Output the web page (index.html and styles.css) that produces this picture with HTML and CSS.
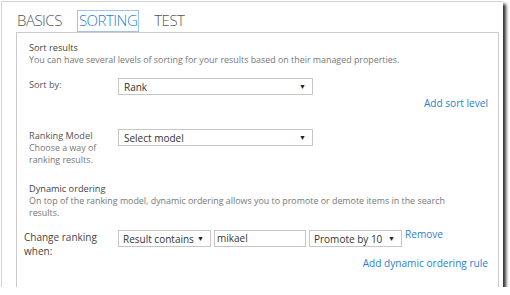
FILE: index.html
```html
<!DOCTYPE html>
<html lang="en">
<head>
	<meta charset="UTF-8">
	<title>Sorting</title>
	<link rel="stylesheet" href="styles.css">
</head>
<body>
	<div class="frame">
		<div class="tabs">
			<span class="tab">BASICS</span>
			<span class="tab tab-active">SORTING</span>
			<span class="tab">TEST</span>
		</div>
		<div class="panel">
			<div class="section">
				<div class="title">Sort results</div>
				<div class="desc">You can have several levels of sorting for your results based on their managed properties.</div>
			</div>

			<div class="row row-sort">
				<div class="label">Sort by:</div>
				<div class="select sel-wide"><span>Rank</span><span class="arrow">&#9660;</span></div>
			</div>
			<div class="link-line"><a class="link">Add sort level</a></div>

			<div class="row row-model">
				<div class="label">Ranking Model<div class="desc">Choose a way of ranking results.</div></div>
				<div class="select sel-wide"><span>Select model</span><span class="arrow">&#9660;</span></div>
			</div>

			<div class="section section-dyn">
				<div class="title">Dynamic ordering</div>
				<div class="desc">On top of the ranking model, dynamic ordering allows you to promote or demote items in the search results.</div>
			</div>

			<div class="row row-change">
				<div class="label label-big">Change ranking when:</div>
				<div class="controls">
					<div class="select sel-small"><span>Result contains</span><span class="arrow">&#9660;</span></div>
					<div class="textbox">mikael</div>
					<div class="select sel-small"><span>Promote by 10</span><span class="arrow">&#9660;</span></div>
					<a class="link link-remove">Remove</a>
				</div>
			</div>
			<div class="link-line link-last"><a class="link">Add dynamic ordering rule</a></div>
		</div>
	</div>
</body>
</html>
```

FILE: styles.css
```css
* {
	box-sizing: border-box;
}

body {
	margin: 0;
	background: #fff;
	font-family: 'Open Sans', sans-serif;
}

.frame {
	margin: 1px 0 0 1px;
	width: 502px;
	height: 286px;
	border-top: 1px solid #d4d4d4;
	border-left: 1px solid #d4d4d4;
	background: #fff;
	box-shadow: 3px 3px 3px #333;
	overflow: hidden;
}

.tabs {
	display: flex;
	gap: 13px;
	padding: 8px 0 0 13px;
	height: 30px;
}

.tab {
	font-size: 15px;
	font-weight: 300;
	letter-spacing: -0.5px;
	color: #555;
	line-height: 18px;
	padding: 0 1px;
	border: 1px solid transparent;
}

.tab-active {
	color: #2a7fd0;
	border-color: #9ec4ec;
}

.panel {
	margin-left: 14px;
	width: 483px;
	height: 260px;
	border: 1px solid #cbcbcb;
	border-bottom: none;
	padding: 9px 10px 0 12px;
}

.title {
	font-size: 9.2px;
	line-height: 12px;
	color: #444;
}

.desc {
	font-size: 8.9px;
	line-height: 12px;
	color: #777;
}

.section-dyn .desc {
	max-width: 435px;
}

.row {
	display: flex;
	align-items: flex-start;
}

.label {
	width: 89px;
	font-size: 9.2px;
	line-height: 12px;
	color: #555;
	padding-top: 1px;
}

.label .desc {
	width: 80px;
}

.row-sort {
	margin-top: 12px;
}

.row-model {
	margin-top: 19px;
}

.section-dyn {
	margin-top: 17px;
}

.row-change {
	margin-top: 11px;
}

.label-big {
	font-size: 10px;
	line-height: 14px;
	width: 94px;
	margin-left: -5px;
	padding-top: 0;
	color: #444;
}

.select {
	display: flex;
	justify-content: space-between;
	align-items: center;
	height: 17px;
	border: 1px solid #c6c6c6;
	padding: 0 6px 0 5px;
	font-size: 10px;
	color: #333;
	background: #fff;
	white-space: nowrap;
}

.sel-wide {
	width: 195px;
}

.sel-small {
	width: 93px;
	padding-left: 4px;
}

.arrow {
	font-size: 7px;
	color: #222;
}

.controls {
	display: flex;
	gap: 3px;
	align-items: flex-start;
}

.textbox {
	width: 92px;
	height: 17px;
	border: 1px solid #c6c6c6;
	padding: 0 2px;
	font-size: 10px;
	line-height: 15px;
	color: #333;
}

.link {
	color: #2a7fd0;
	font-size: 10.1px;
	line-height: 14px;
	white-space: nowrap;
}

.link-remove {
	margin-top: -3px;
}

.link-line {
	display: flex;
	justify-content: flex-end;
	margin-top: 1px;
}

.link-last {
	margin-top: -2px;
}
```
